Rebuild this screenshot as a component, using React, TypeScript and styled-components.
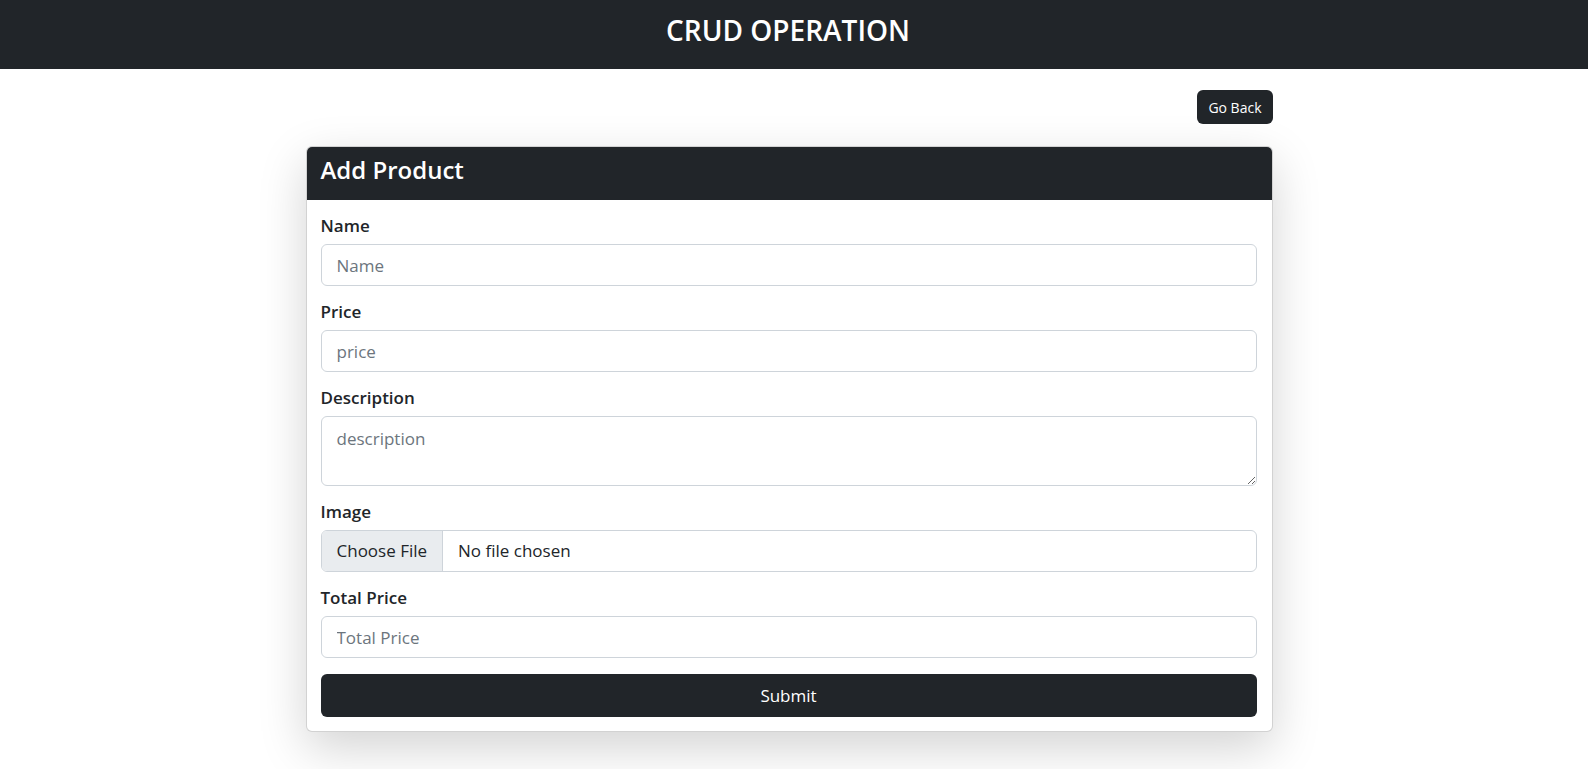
import React from "react";
import styled, { createGlobalStyle } from "styled-components";

const FONT = `"Segoe UI", "Open Sans", "Noto Sans", "Liberation Sans", sans-serif`;
const DARK = "#212529";

const GlobalStyle = createGlobalStyle`
  *, *::before, *::after { box-sizing: border-box; }
  body {
    margin: 0;
    font-family: ${FONT};
    font-size: 17px;
    line-height: 1.5;
    color: ${DARK};
    background: #fff;
  }
`;

const TopBar = styled.header`
  height: 69px;
  background: ${DARK};
  display: flex;
  align-items: center;
  justify-content: center;
  padding: 0 12px 8px 0;
`;

const Title = styled.h2`
  margin: 0;
  color: #fff;
  font-size: 28px;
  font-weight: 600;
  line-height: 1.2;
`;

const Page = styled.div`
  padding-right: 10px;
`;

const Main = styled.main`
  width: 967px;
  margin: 0 auto;
  padding-top: 21px;
  padding-bottom: 40px;
`;

const Toolbar = styled.div`
  display: flex;
  justify-content: flex-end;
  margin-bottom: 22px;
`;

const BackButton = styled.button`
  height: 34px;
  padding: 0 11px;
  border: none;
  border-radius: 6px;
  background: ${DARK};
  color: #fff;
  font-family: ${FONT};
  font-size: 14px;
  cursor: pointer;
`;

const Card = styled.section`
  background: #fff;
  border: 1px solid rgba(0, 0, 0, 0.175);
  border-radius: 6px;
  box-shadow: 0 16px 48px rgba(0, 0, 0, 0.175);
  overflow: hidden;
`;

const CardHeader = styled.div`
  height: 53px;
  background: ${DARK};
  display: flex;
  align-items: center;
  padding: 0 14px 7px;
`;

const CardTitle = styled.h3`
  margin: 0;
  color: #fff;
  font-size: 24px;
  font-weight: 600;
  line-height: 1.2;
`;

const Form = styled.form`
  display: flex;
  flex-direction: column;
  gap: 16px;
  padding: 16px 15px 14px 14px;
`;

const Field = styled.div`
  display: flex;
  flex-direction: column;
`;

const Label = styled.label`
  font-weight: 600;
  line-height: 20px;
  margin-bottom: 8px;
`;

const controlBase = `
  width: 100%;
  border: 1px solid #ced4da;
  border-radius: 6px;
  background: #fff;
  color: ${DARK};
  font-family: ${FONT};
  font-size: 17px;
  line-height: 24px;
  outline: none;
  &::placeholder { color: #6c757d; opacity: 1; }
`;

const Input = styled.input`
  ${controlBase}
  height: 42px;
  padding: 0 15px;
`;

const TextArea = styled.textarea`
  ${controlBase}
  height: 70px;
  padding: 10px 15px 6px;
  resize: vertical;
  display: block;
`;

const FilePicker = styled.label`
  display: flex;
  height: 42px;
  border: 1px solid #ced4da;
  border-radius: 6px;
  overflow: hidden;
  cursor: pointer;
`;

const HiddenFile = styled.input`
  display: none;
`;

const FileButton = styled.span`
  display: flex;
  align-items: center;
  padding: 0 15px;
  background: #e9ecef;
  border-right: 1px solid #ced4da;
`;

const FileName = styled.span`
  display: flex;
  align-items: center;
  padding-left: 15px;
`;

const SubmitButton = styled.button`
  height: 43px;
  width: 100%;
  border: none;
  border-radius: 6px;
  background: ${DARK};
  color: #fff;
  font-family: ${FONT};
  font-size: 17px;
  cursor: pointer;
`;

export default function App() {
  return (
    <>
      <GlobalStyle />
      <TopBar>
        <Title>CRUD OPERATION</Title>
      </TopBar>
      <Page>
        <Main>
          <Toolbar>
            <BackButton type="button">Go Back</BackButton>
          </Toolbar>
          <Card>
            <CardHeader>
              <CardTitle>Add Product</CardTitle>
            </CardHeader>
            <Form onSubmit={(e) => e.preventDefault()}>
              <Field>
                <Label htmlFor="name">Name</Label>
                <Input id="name" type="text" placeholder="Name" />
              </Field>
              <Field>
                <Label htmlFor="price">Price</Label>
                <Input id="price" type="text" placeholder="price" />
              </Field>
              <Field>
                <Label htmlFor="description">Description</Label>
                <TextArea id="description" placeholder="description" />
              </Field>
              <Field>
                <Label as="span">Image</Label>
                <FilePicker>
                  <HiddenFile type="file" />
                  <FileButton>Choose File</FileButton>
                  <FileName>No file chosen</FileName>
                </FilePicker>
              </Field>
              <Field>
                <Label htmlFor="total">Total Price</Label>
                <Input id="total" type="text" placeholder="Total Price" />
              </Field>
              <SubmitButton type="submit">Submit</SubmitButton>
            </Form>
          </Card>
        </Main>
      </Page>
    </>
  );
}
